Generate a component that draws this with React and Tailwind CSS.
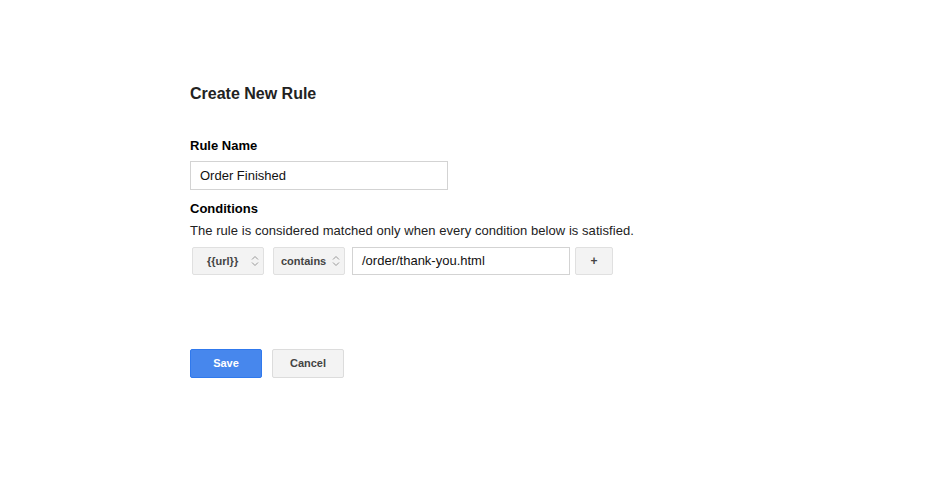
import React from "react";

function Chevrons() {
  return (
    <svg width="8" height="12" viewBox="0 0 8 12" className="shrink-0">
      <path d="M1 4.5 L4 1.5 L7 4.5" fill="none" stroke="#999" strokeWidth="1" />
      <path d="M1 7.5 L4 10.5 L7 7.5" fill="none" stroke="#999" strokeWidth="1" />
    </svg>
  );
}

export default function App() {
  return (
    <div className="w-[928px] h-[480px] bg-white font-['Liberation_Sans',Arial,sans-serif] text-[#222]">
      <div className="pl-[190px] pt-[84px]">
        <h1 className="text-[16px] leading-[20px] font-bold text-[#222]">Create New Rule</h1>
        <div className="mt-[34px] text-[13px] leading-[16px] font-bold text-black">Rule Name</div>
        <div className="mt-[7px] w-[258px] h-[29px] border border-[#d3d3d3] flex items-center pl-[9px] text-[13px] text-[#111]">
          Order Finished
        </div>
        <div className="mt-[11px] text-[13px] leading-[16px] font-bold text-black">Conditions</div>
        <div className="mt-[6px] text-[13px] leading-[16px] text-[#222] tracking-[0.05px]">
          The rule is considered matched only when every condition below is satisfied.
        </div>
        <div className="mt-[8px] flex items-center">
          <div className="ml-[2px] w-[72px] h-[28px] bg-[#f3f3f3] border border-[#e0e0e0] rounded-[2px] flex items-center pl-[14px] pr-[4px] justify-between text-[11px] font-bold text-[#444]">
            <span>{"{{url}}"}</span>
            <Chevrons />
          </div>
          <div className="ml-[9px] w-[72px] h-[28px] bg-[#f3f3f3] border border-[#e0e0e0] rounded-[2px] flex items-center pl-[7px] pr-[4px] justify-between text-[11px] font-bold text-[#444]">
            <span>contains</span>
            <Chevrons />
          </div>
          <div className="ml-[7px] w-[218px] h-[28px] border border-[#d3d3d3] flex items-center pl-[9px] text-[13px] text-[#111]">
            /order/thank-you.html
          </div>
          <div className="ml-[5px] w-[38px] h-[28px] bg-[#f3f3f3] border border-[#e0e0e0] rounded-[2px] flex items-center justify-center text-[12px] font-bold text-[#444]">
            +
          </div>
        </div>
        <div className="mt-[74px] flex items-center">
          <div className="w-[72px] h-[29px] bg-[#4787ed] border border-[#3079ed] rounded-[2px] flex items-center justify-center text-[11px] font-bold text-white">
            Save
          </div>
          <div className="ml-[10px] w-[72px] h-[29px] bg-[#f3f3f3] border border-[#dcdcdc] rounded-[2px] flex items-center justify-center text-[11px] font-bold text-[#444]">
            Cancel
          </div>
        </div>
      </div>
    </div>
  );
}
